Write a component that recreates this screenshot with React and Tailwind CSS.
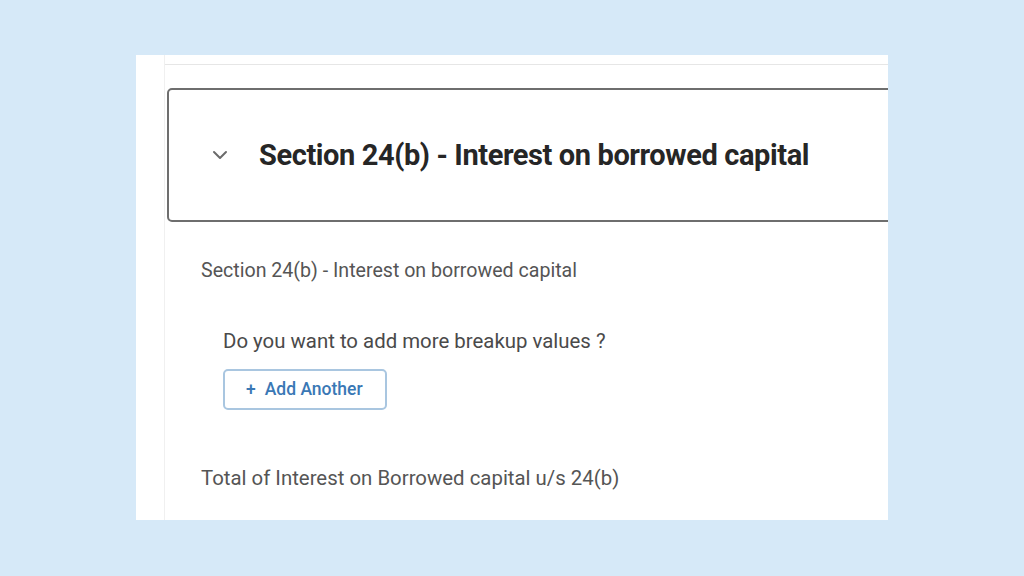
import React from "react";

const Chevron = () => (
    <svg width="16" height="10" viewBox="0 0 16 10" fill="none">
        <path d="M2 2l6 6 6-6" stroke="#6b6b6b" strokeWidth="2" strokeLinecap="round" strokeLinejoin="round" />
    </svg>
);

export default function App() {
    return (
        <div className="w-[1024px] h-[576px] bg-[#d6e9f8] pt-[55px] pl-[136px] overflow-hidden" style={{ fontFamily: "Roboto, 'Liberation Sans', sans-serif" }}>
            <div className="w-[752px] h-[465px] bg-white overflow-hidden pl-[28px]">
                <div className="h-full border-l border-[#f0f0f0] flex flex-col">
                    {/* previous card, cut off above */}
                    <div className="h-[10px] w-[760px] border-b border-[#e6e6e6] shrink-0" />

                    {/* accordion header */}
                    <div className="mt-[23px] ml-[2px] w-[760px] h-[134px] shrink-0 border-2 border-[#6e6e6e] rounded-[5px] flex items-center pl-[43px]">
                        <Chevron />
                        <h2 className="ml-[31px] text-[29px] font-bold text-[#262626] tracking-[-0.4px] pt-[2px] whitespace-nowrap">
                            Section 24(b) - Interest on borrowed capital
                        </h2>
                    </div>

                    {/* body */}
                    <div className="pl-[36px] pt-[36px]">
                        <p className="text-[19.6px] text-[#555] leading-[26px] whitespace-nowrap">
                            Section 24(b) - Interest on borrowed capital
                        </p>
                        <div className="pl-[22px] pt-[44px]">
                            <p className="text-[20.4px] text-[#4a4a4a] leading-[26px] whitespace-nowrap">
                                Do you want to add more breakup values ?
                            </p>
                            <button className="mt-[15px] w-[164px] h-[41px] border-2 border-[#a9c6e0] rounded-[5px] flex items-center pl-[21px] text-[17.5px] font-medium text-[#3a78b5]">
                                <span className="mr-[9px]">+</span>
                                Add Another
                            </button>
                        </div>
                        <p className="pt-[55px] text-[20.4px] text-[#555] leading-[26px] whitespace-nowrap">
                            Total of Interest on Borrowed capital u/s 24(b)
                        </p>
                    </div>
                </div>
            </div>
        </div>
    );
}
